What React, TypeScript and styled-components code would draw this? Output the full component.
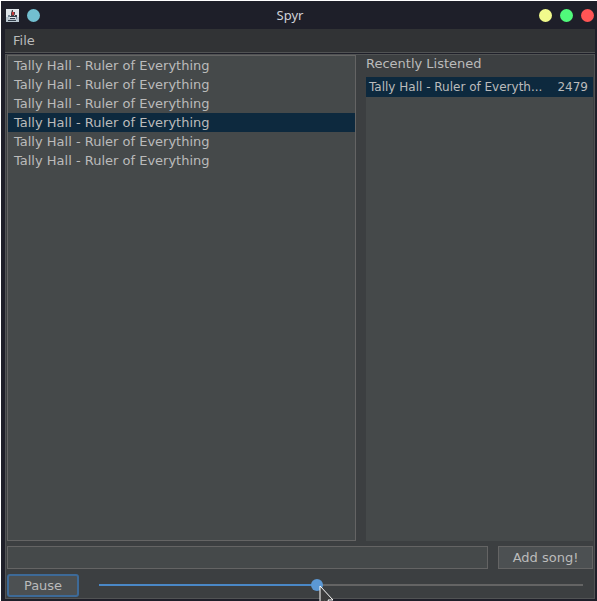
import React, { useState } from "react";
import styled, { createGlobalStyle } from "styled-components";

const color = {
  frame: "#1e1f29",
  menu: "#313335",
  panel: "#3c3f41",
  field: "#45494a",
  button: "#4c5052",
  line: "#646464",
  softLine: "#515354",
  selected: "#0d293e",
  text: "#bbbbbb",
  accent: "#4a88c7",
};

const GlobalStyle = createGlobalStyle`
  *, *::before, *::after { box-sizing: border-box; }
  body {
    margin: 0;
    background: #ffffff;
    color: ${color.text};
    font: 13px/19px "DejaVu Sans", sans-serif;
  }
  button, input { font: inherit; color: inherit; margin: 0; }
`;

const Window = styled.div`
  display: flex;
  flex-direction: column;
  min-height: 100vh;
  padding: 0 2px 2px 4px;
  border-top: 1px solid #ffffff;
  border-left: 1px solid #ffffff;
  background: ${color.frame};
  overflow: hidden;
`;

const TitleBar = styled.header`
  display: grid;
  grid-template-columns: 1fr auto 1fr;
  align-items: center;
  height: 28px;
`;

const TitleGroup = styled.div<{ $end?: boolean }>`
  display: flex;
  align-items: center;
  justify-content: ${(p) => (p.$end ? "flex-end" : "flex-start")};
  gap: 8px;
  padding: ${(p) => (p.$end ? "0 1px 0 0" : "0 0 0 1px")};
`;

const Title = styled.h1`
  margin: 0;
  padding-right: 20px;
  font: 13px/19px "Noto Sans", sans-serif;
  color: #d0d2d8;
`;

const WindowButton = styled.button<{ $fill: string }>`
  width: 13px;
  height: 13px;
  padding: 0;
  border: 0;
  border-radius: 50%;
  background: ${(p) => p.$fill};
`;

const MenuBar = styled.nav`
  display: flex;
  height: 24px;
  background: ${color.menu};
  border-bottom: 1px solid ${color.softLine};
`;

const MenuButton = styled.button`
  padding: 0 8px;
  border: 0;
  background: none;
`;

const Body = styled.main`
  display: flex;
  flex: 1;
  flex-direction: column;
  gap: 5px;
  margin-top: 1px;
  padding: 0 1px 1px;
  border: 1px solid ${color.softLine};
  background: ${color.panel};
`;

const Split = styled.div`
  display: grid;
  grid-template-columns: 349fr 227fr;
  gap: 10px;
  flex: 1;
`;

const SongList = styled.ul`
  margin: 0;
  padding: 0;
  border: 1px solid ${color.line};
  background: ${color.field};
  list-style: none;
`;

const Song = styled.li<{ $selected: boolean }>`
  padding: 0 6px;
  background: ${(p) => (p.$selected ? color.selected : "transparent")};
`;

const Recent = styled.section`
  display: flex;
  flex-direction: column;
  min-width: 0;
`;

const RecentTitle = styled.h2`
  margin: 0 0 4px;
  font: inherit;
  line-height: 18px;
`;

const RecentTable = styled.div`
  flex: 1;
  background: ${color.field};
`;

const Table = styled.table`
  width: 100%;
  border-collapse: collapse;
  background: ${color.selected};
  font-size: 12px;
`;

const Cell = styled.td<{ $count?: boolean }>`
  height: 20px;
  padding: ${(p) => (p.$count ? "0 5px 0 0" : "0 0 0 3px")};
  white-space: nowrap;
  text-align: ${(p) => (p.$count ? "right" : "left")};
`;

const AddRow = styled.form`
  display: flex;
  gap: 10px;
`;

const SongInput = styled.input`
  flex: 1;
  min-width: 0;
  height: 23px;
  padding: 0 6px;
  border: 1px solid ${color.line};
  background: ${color.field};
  outline: 0;
`;

const ActionButton = styled.button<{ $active?: boolean }>`
  width: ${(p) => (p.$active ? "72px" : "95px")};
  height: 23px;
  padding: 0;
  border: ${(p) => (p.$active ? "2px solid #3d6a98" : `1px solid ${color.line}`)};
  border-radius: ${(p) => (p.$active ? "3px" : "0")};
  background: ${color.button};
  outline: 0;
`;

const Player = styled.div`
  display: flex;
  gap: 20px;
  padding-right: 10px;
`;

const SliderBox = styled.div`
  position: relative;
  display: flex;
  flex: 1;
  margin-top: 5px;
`;

const Slider = styled.input`
  appearance: none;
  width: 100%;
  height: 12px;
  background: linear-gradient(${color.accent}, ${color.accent}) 0 5px / var(--played) 2px no-repeat,
    linear-gradient(${color.line}, ${color.line}) 0 5px / 100% 2px no-repeat;
  outline: 0;

  &::-webkit-slider-thumb {
    appearance: none;
    width: 12px;
    height: 12px;
    border: 0;
    border-radius: 50%;
    background: #5b98d5;
  }
`;

const Pointer = styled.svg`
  position: absolute;
  top: 6px;
  left: calc(45% + 2px);
  width: 16px;
  height: 24px;
  pointer-events: none;
`;

const JavaIcon = () => (
  <svg width="13" height="13" viewBox="0 0 13 13" aria-hidden="true">
    <rect width="13" height="13" fill="#dfe5e8" />
    <path d="M0 8h3l1 2h5l1-2h3v5H0z" fill="#b9c6cf" />
    <path d="M6 1h1v2h2v2L8 7H5V4z" fill="#4a4144" />
    <path d="M6 3h2v3H6z" fill="#c43b3b" />
    <path d="M3 7h6v1H3zM4 9h5v1H4zM9 6h2v2H9zM2 11h8v1H2z" fill="#343f4b" />
    <path d="M2 6h2v2H2zM10 8h1v2h-1z" fill="#788b9a" />
  </svg>
);

const songs = Array.from({ length: 6 }, (_, id) => ({ id, name: "Tally Hall - Ruler of Everything" }));

export default function App() {
  const [selected, setSelected] = useState(3);
  const [position, setPosition] = useState(449);
  const [playing, setPlaying] = useState(true);

  return (
    <>
      <GlobalStyle />
      <Window>
        <TitleBar>
          <TitleGroup>
            <JavaIcon />
            <WindowButton type="button" aria-label="Pin" $fill="#72bfd0" />
          </TitleGroup>
          <Title>Spyr</Title>
          <TitleGroup $end>
            <WindowButton type="button" aria-label="Minimize" $fill="#f1fa8c" />
            <WindowButton type="button" aria-label="Maximize" $fill="#50fa7b" />
            <WindowButton type="button" aria-label="Close" $fill="#ff5555" />
          </TitleGroup>
        </TitleBar>
        <MenuBar>
          <MenuButton type="button">File</MenuButton>
        </MenuBar>
        <Body>
          <Split>
            <SongList>
              {songs.map((song) => (
                <Song key={song.id} $selected={song.id === selected} onClick={() => setSelected(song.id)}>
                  {song.name}
                </Song>
              ))}
            </SongList>
            <Recent>
              <RecentTitle>Recently Listened</RecentTitle>
              <RecentTable>
                <Table aria-label="Recently Listened">
                  <tbody>
                    <tr>
                      <Cell>Tally Hall - Ruler of Everyth...</Cell>
                      <Cell $count>2479</Cell>
                    </tr>
                  </tbody>
                </Table>
              </RecentTable>
            </Recent>
          </Split>
          <AddRow onSubmit={(e: React.FormEvent) => e.preventDefault()}>
            <SongInput type="text" aria-label="Song" />
            <ActionButton type="submit">Add song!</ActionButton>
          </AddRow>
          <Player>
            <ActionButton type="button" $active onClick={() => setPlaying(!playing)}>
              {playing ? "Pause" : "Play"}
            </ActionButton>
            <SliderBox>
              <Slider
                type="range"
                aria-label="Position"
                min={0}
                max={1000}
                value={position}
                onChange={(e: React.ChangeEvent<HTMLInputElement>) => setPosition(Number(e.target.value))}
                style={{ "--played": `${position / 10}%` } as React.CSSProperties}
              />
              <Pointer viewBox="0 0 16 24" aria-hidden="true">
                <path d="M1 1v19l5-4 3 6h3l-3-7h5z" fill="#3c3c3c" stroke="#ffffff" />
              </Pointer>
            </SliderBox>
          </Player>
        </Body>
      </Window>
    </>
  );
}
